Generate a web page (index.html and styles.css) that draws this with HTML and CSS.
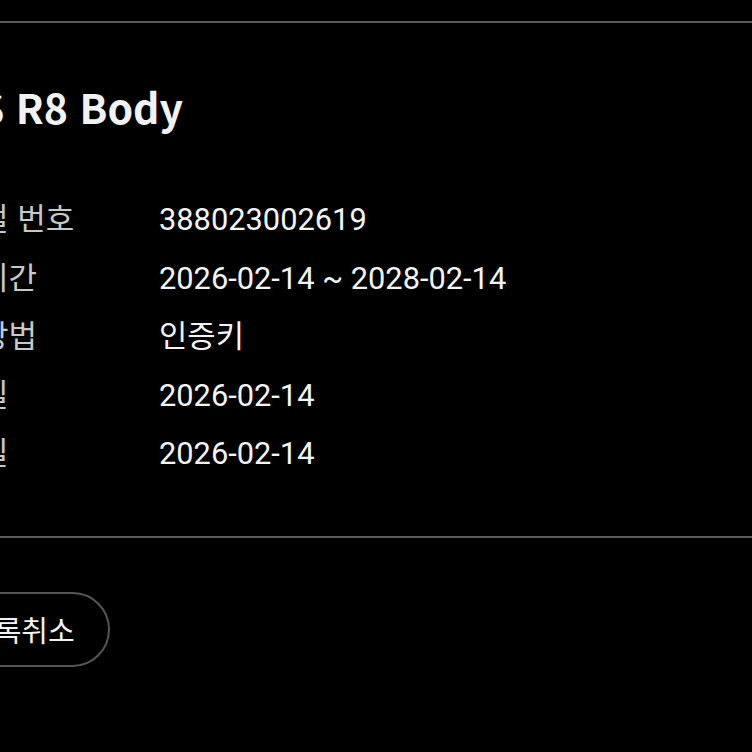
FILE: index.html
```html
<!DOCTYPE html>
<html lang="ko">
<head>
<meta charset="utf-8">
<link rel="stylesheet" href="styles.css">
</head>
<body>
<div class="rule rule-top"></div>
<div class="page">
  <h1 class="title">EOS R8 Body</h1>
  <div class="info">
    <div class="label">시리얼 번호</div><div class="value">388023002619</div>
    <div class="label">사용기간</div><div class="value">2026-02-14 ~ 2028-02-14</div>
    <div class="label">인증방법</div><div class="value">인증키</div>
    <div class="label">등록일</div><div class="value">2026-02-14</div>
    <div class="label">활성일</div><div class="value">2026-02-14</div>
  </div>
</div>
<div class="rule rule-mid"></div>
<div class="page">
  <button class="btn">등록취소</button>
</div>
</body>
</html>
```

FILE: styles.css
```css
html, body {
  margin: 0;
  padding: 0;
  background: #000;
}
body {
  width: 752px;
  height: 752px;
  overflow: hidden;
  font-family: "Noto Sans CJK KR", Roboto, sans-serif;
  color: #f0f0f0;
}
.rule {
  height: 2px;
  background: #5a5a5a;
}
.rule-top {
  margin-top: 21px;
}
.page {
  margin-left: -72px;
}
.title {
  margin: 0 0 0 -6px;
  padding-top: 53px;
  font-size: 41px;
  line-height: 60px;
  font-weight: 700;
  color: #f2f2f2;
}
.info {
  display: grid;
  grid-template-columns: 236px 1fr;
  grid-auto-rows: 58.5px;
  margin-top: 52px;
  margin-bottom: 55px;
  margin-left: -5px;
  font-size: 31px;
  line-height: 58.5px;
}
.label {
  color: #c8c8c8;
  white-space: nowrap;
}
.value {
  padding-top: 3px;
  font-family: Roboto, "Noto Sans CJK KR", sans-serif;
  font-size: 30.8px;
  color: #f4f4f4;
  white-space: nowrap;
}
.btn {
  margin-top: 54px;
  box-sizing: border-box;
  height: 75px;
  padding: 0 33px 0 38px;
  border: 2px solid #555;
  border-radius: 38px;
  background: #000;
  color: #f2f2f2;
  font-family: "Noto Sans CJK KR", Roboto, sans-serif;
  font-size: 29px;
  display: inline-flex;
  align-items: center;
}
```
